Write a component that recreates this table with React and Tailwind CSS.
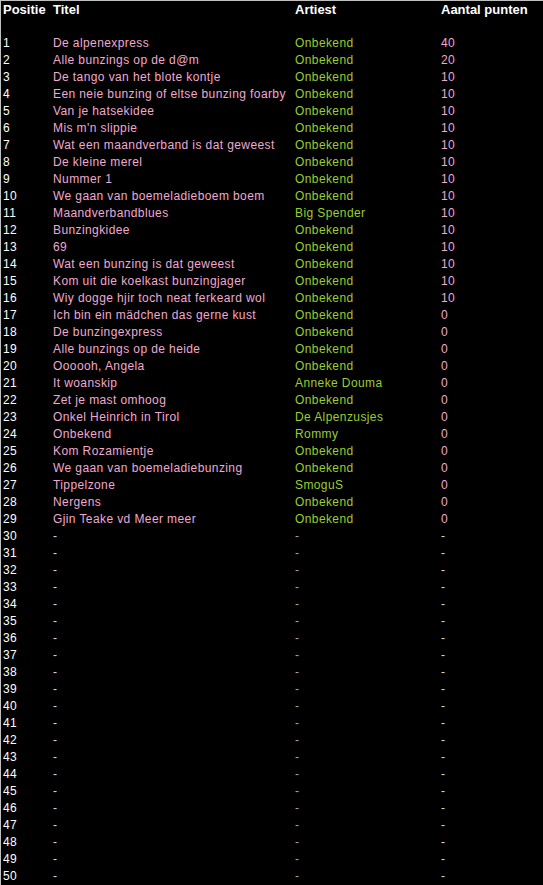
import React from 'react';

const songs = [
  ['De alpenexpress', 'Onbekend', '40'],
  ['Alle bunzings op de d@m', 'Onbekend', '20'],
  ['De tango van het blote kontje', 'Onbekend', '10'],
  ['Een neie bunzing of eltse bunzing foarby', 'Onbekend', '10'],
  ['Van je hatsekidee', 'Onbekend', '10'],
  ["Mis m'n slippie", 'Onbekend', '10'],
  ['Wat een maandverband is dat geweest', 'Onbekend', '10'],
  ['De kleine merel', 'Onbekend', '10'],
  ['Nummer 1', 'Onbekend', '10'],
  ['We gaan van boemeladieboem boem', 'Onbekend', '10'],
  ['Maandverbandblues', 'Big Spender', '10'],
  ['Bunzingkidee', 'Onbekend', '10'],
  ['69', 'Onbekend', '10'],
  ['Wat een bunzing is dat geweest', 'Onbekend', '10'],
  ['Kom uit die koelkast bunzingjager', 'Onbekend', '10'],
  ['Wiy dogge hjir toch neat ferkeard wol', 'Onbekend', '10'],
  ['Ich bin ein mädchen das gerne kust', 'Onbekend', '0'],
  ['De bunzingexpress', 'Onbekend', '0'],
  ['Alle bunzings op de heide', 'Onbekend', '0'],
  ['Oooooh, Angela', 'Onbekend', '0'],
  ['It woanskip', 'Anneke Douma', '0'],
  ['Zet je mast omhoog', 'Onbekend', '0'],
  ['Onkel Heinrich in Tirol', 'De Alpenzusjes', '0'],
  ['Onbekend', 'Rommy', '0'],
  ['Kom Rozamientje', 'Onbekend', '0'],
  ['We gaan van boemeladiebunzing', 'Onbekend', '0'],
  ['Tippelzone', 'SmoguS', '0'],
  ['Nergens', 'Onbekend', '0'],
  ['Gjin Teake vd Meer meer', 'Onbekend', '0'],
];

const rows = Array.from({ length: 50 }, (_, i) => songs[i] || null);

export default function App() {
  return (
    <div
      className="w-[543px] h-[885px] bg-black border-t border-l border-[#c0c0c0] overflow-hidden"
      style={{ fontFamily: '"Liberation Sans", Arial, sans-serif' }}
    >
      {/* header */}
      <div className="grid grid-cols-[50px_242px_146px_1fr] pl-[2px] h-[17px] leading-[17px] text-[13px] font-bold text-white">
        <div>Positie</div>
        <div>Titel</div>
        <div>Artiest</div>
        <div>Aantal punten</div>
      </div>
      <div className="h-[17px]"></div>

      {rows.map((song, i) => (
        <div
          key={i}
          className="grid grid-cols-[50px_242px_146px_1fr] pl-[2px] h-[17px] leading-[17px] text-[12px] tracking-[0.4px] whitespace-nowrap"
        >
          <div className="text-white">{i + 1}</div>
          {song ? (
            <>
              <div className="text-[#f0a8d0]">{song[0]}</div>
              <div className="text-[#9acd32]">{song[1]}</div>
              <div className="text-[#f0a8d0]">{song[2]}</div>
            </>
          ) : (
            <>
              <div className="text-[#d8d8d8]">-</div>
              <div className="text-[#a8a898]">-</div>
              <div className="text-[#d8d8d8]">-</div>
            </>
          )}
        </div>
      ))}
    </div>
  );
}
